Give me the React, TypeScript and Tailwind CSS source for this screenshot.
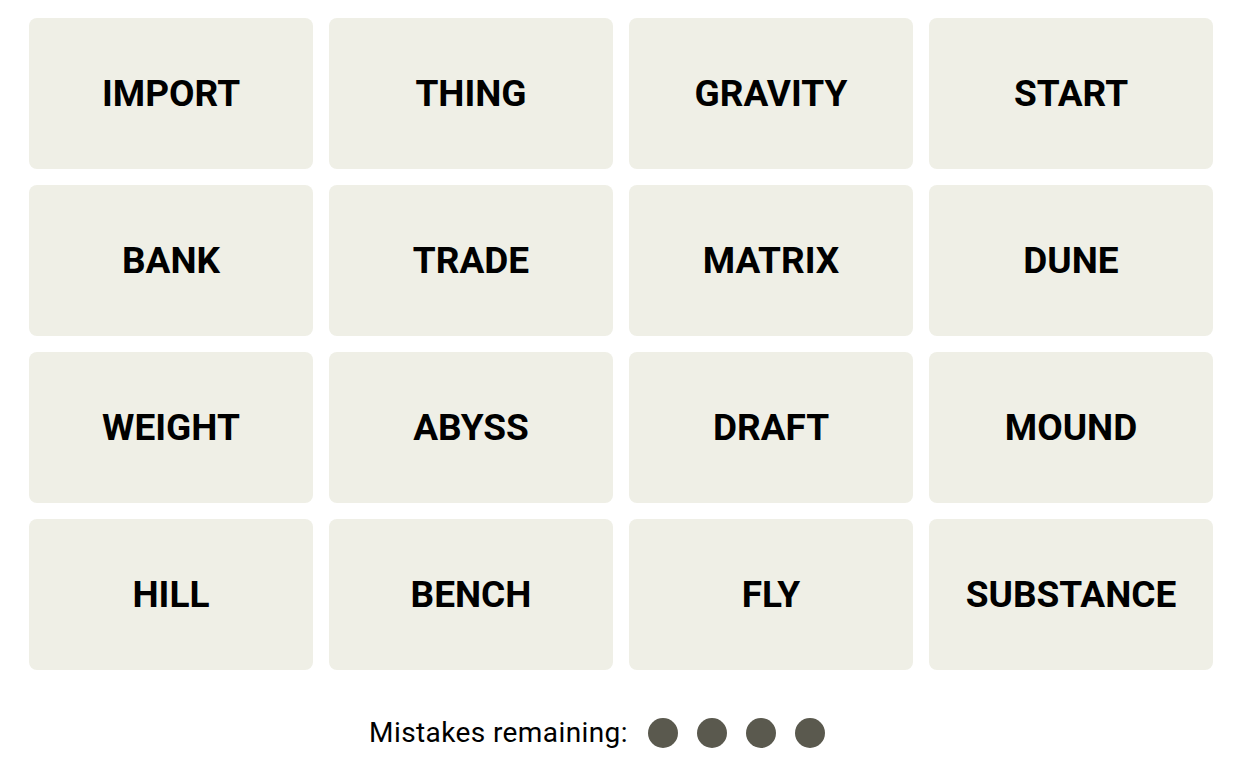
const words = [
  'IMPORT', 'THING', 'GRAVITY', 'START',
  'BANK', 'TRADE', 'MATRIX', 'DUNE',
  'WEIGHT', 'ABYSS', 'DRAFT', 'MOUND',
  'HILL', 'BENCH', 'FLY', 'SUBSTANCE',
];

export default function App() {
  return (
    <div className="min-h-screen w-full bg-white pl-[29px] pt-[18px]" style={{ fontFamily: 'Roboto, "Liberation Sans", sans-serif' }}>
      <div className="grid w-[1184px] grid-cols-4 gap-x-4 gap-y-4">
        {words.map((w) => (
          <button
            key={w}
            className="flex h-[151px] items-center justify-center rounded-lg bg-[#efefe6] text-[37px] font-bold uppercase text-black"
          >
            {w}
          </button>
        ))}
      </div>

      <div className="mt-[42px] flex w-[1184px] items-center justify-center pr-[48px]">
        <span className="text-[28px] tracking-[0.4px] text-black">Mistakes remaining:</span>
        <div className="ml-5 flex gap-[19px]">
          {[0, 1, 2, 3].map((i) => (
            <span key={i} className="h-[30px] w-[30px] rounded-full bg-[#5a594e]" />
          ))}
        </div>
      </div>
    </div>
  );
}
